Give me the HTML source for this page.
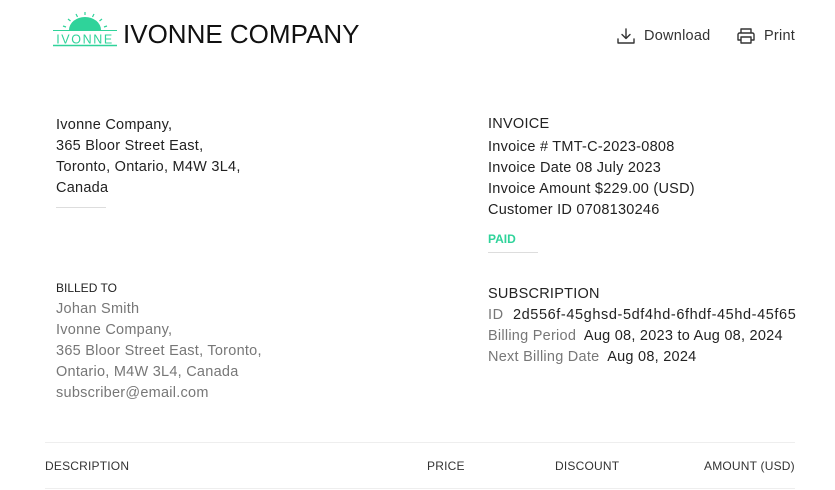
<!DOCTYPE html>
<html><head><meta charset="utf-8"><style>
body{margin:0;width:835px;height:490px;background:#fff;font-family:"Liberation Sans",sans-serif;color:#222;position:relative;overflow:hidden}
.a{position:absolute;white-space:nowrap}
.t{font-size:14.5px;line-height:21px;letter-spacing:0.25px}
.g{color:#777}
.hr{position:absolute;height:1px;background:#ddd}
.th{font-size:12px;color:#333;position:absolute;top:459px;letter-spacing:0.2px}
</style></head><body>
<svg class="a" style="left:52px;top:10px" width="66" height="40" viewBox="0 0 66 40">
<g fill="#2fd39a" stroke="#2fd39a">
<path d="M17 20 A16 13 0 0 1 49 20 Z" stroke="none"/>
<g stroke-width="1.2">
<line x1="33" y1="2" x2="33" y2="5"/><line x1="24" y1="4" x2="25.5" y2="7"/><line x1="42" y1="4" x2="40.5" y2="7"/>
<line x1="16" y1="9" x2="18.5" y2="11"/><line x1="50" y1="9" x2="47.5" y2="11"/>
<line x1="11" y1="16" x2="14" y2="17"/><line x1="55" y1="16" x2="52" y2="17"/>
</g>
<line x1="1" y1="20.5" x2="65" y2="20.5" stroke-width="1"/>
<line x1="1" y1="35.5" x2="65" y2="35.5" stroke-width="1.5"/>
</g>
<text x="33" y="33.5" text-anchor="middle" font-family="Liberation Sans,sans-serif" font-size="12.5" letter-spacing="1.6" fill="#2fd39a">IVONNE</text>
</svg>
<div class="a" style="left:123px;top:19px;font-size:26px;color:#111">IVONNE COMPANY</div>

<svg class="a" style="left:616px;top:27px" width="20" height="18" viewBox="0 0 20 18" fill="none" stroke="#333" stroke-width="1.4" stroke-linecap="round" stroke-linejoin="round">
<path d="M10 2v9M6 7.5l4 4 4-4M2 12v4h16v-4"/></svg>
<div class="a t" style="left:644px;top:26px;color:#333">Download</div>
<svg class="a" style="left:736px;top:27px" width="20" height="18" viewBox="0 0 20 18" fill="none" stroke="#333" stroke-width="1.4" stroke-linejoin="round">
<path d="M5 6V2h10v4M5 13H2V7.5a1.5 1.5 0 0 1 1.5-1.5h13A1.5 1.5 0 0 1 18 7.5V13h-3M5 10h10v6H5z"/></svg>
<div class="a t" style="left:764px;top:26px;color:#333">Print</div>

<div class="a t" style="left:56px;top:115px">Ivonne Company,<br>365 Bloor Street East,<br>Toronto, Ontario, M4W 3L4,<br>Canada</div>
<div class="hr" style="left:56px;top:207px;width:50px"></div>

<div class="a t" style="left:488px;top:114px">INVOICE</div>
<div class="a t" style="left:488px;top:137px">Invoice # TMT-C-2023-0808<br>Invoice Date 08 July 2023<br>Invoice Amount $229.00 (USD)<br>Customer ID 0708130246</div>
<div class="a" style="left:488px;top:232px;font-size:12px;font-weight:bold;color:#2fd39a">PAID</div>
<div class="hr" style="left:488px;top:252px;width:50px"></div>

<div class="a" style="left:56px;top:281px;font-size:12px">BILLED TO</div>
<div class="a t g" style="left:56px;top:299px">Johan Smith<br>Ivonne Company,<br>365 Bloor Street East, Toronto,<br>Ontario, M4W 3L4, Canada<br>subscriber@email.com</div>

<div class="a t" style="left:488px;top:284px">SUBSCRIPTION</div>
<div class="a t" style="left:488px;top:305px"><span style="letter-spacing:0.6px"><span class="g">ID</span>&nbsp; 2d556f-45ghsd-5df4hd-6fhdf-45hd-45f65</span><br><span class="g">Billing Period</span>&nbsp; Aug 08, 2023 to Aug 08, 2024<br><span class="g">Next Billing Date</span>&nbsp; Aug 08, 2024</div>

<div class="hr" style="left:45px;top:442px;width:750px;background:#eee"></div>
<div class="th" style="left:45px">DESCRIPTION</div>
<div class="th" style="left:427px">PRICE</div>
<div class="th" style="left:555px">DISCOUNT</div>
<div class="th" style="left:704px">AMOUNT (USD)</div>
<div class="hr" style="left:45px;top:488px;width:750px;background:#eee"></div>
</body></html>
